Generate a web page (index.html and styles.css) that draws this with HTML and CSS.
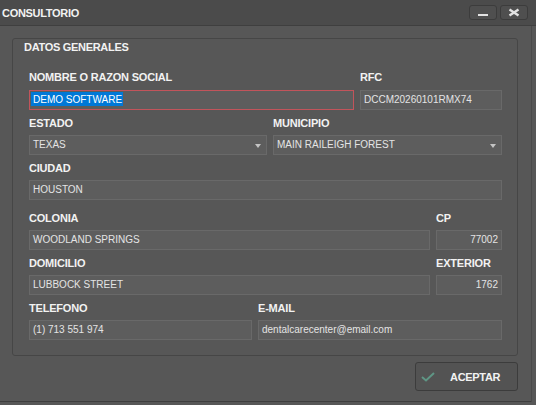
FILE: index.html
```html
<!DOCTYPE html>
<html lang="es">
<head>
    <meta charset="UTF-8">
    <title>Consultorio</title>
    <link rel="stylesheet" href="styles.css">
</head>
<body>
    <div class="window">
        <div class="titlebar">
            <span class="title">CONSULTORIO</span>
            <div class="title-buttons">
                <button class="tbtn" type="button">
                    <svg width="12" height="4" viewBox="0 0 12 4"><rect x="1" y="1" width="10" height="2" fill="#e2e2e2"/></svg>
                </button>
                <button class="tbtn" type="button">
                    <svg width="12" height="9" viewBox="0 0 12 9"><path d="M1.5 1.5 L10.5 7.5 M10.5 1.5 L1.5 7.5" stroke="#e2e2e2" stroke-width="2.4"/></svg>
                </button>
            </div>
        </div>

        <div class="content">
            <fieldset class="groupbox">
                <div class="group-title">DATOS GENERALES</div>

                <div class="row first">
                    <div class="field grow">
                        <label>NOMBRE O RAZON SOCIAL</label>
                        <div class="input active"><span class="selected">DEMO SOFTWARE</span></div>
                    </div>
                    <div class="field w142">
                        <label>RFC</label>
                        <div class="input">DCCM20260101RMX74</div>
                    </div>
                </div>

                <div class="row">
                    <div class="field grow">
                        <label>ESTADO</label>
                        <div class="input select">TEXAS</div>
                    </div>
                    <div class="field w229">
                        <label>MUNICIPIO</label>
                        <div class="input select">MAIN RAILEIGH FOREST</div>
                    </div>
                </div>

                <div class="row">
                    <div class="field grow">
                        <label>CIUDAD</label>
                        <div class="input">HOUSTON</div>
                    </div>
                </div>

                <div class="row spaced">
                    <div class="field grow">
                        <label>COLONIA</label>
                        <div class="input">WOODLAND SPRINGS</div>
                    </div>
                    <div class="field w66">
                        <label>CP</label>
                        <div class="input num">77002</div>
                    </div>
                </div>

                <div class="row">
                    <div class="field grow">
                        <label>DOMICILIO</label>
                        <div class="input">LUBBOCK STREET</div>
                    </div>
                    <div class="field w66">
                        <label>EXTERIOR</label>
                        <div class="input num">1762</div>
                    </div>
                </div>

                <div class="row">
                    <div class="field grow">
                        <label>TELEFONO</label>
                        <div class="input">(1) 713 551 974</div>
                    </div>
                    <div class="field w244">
                        <label>E-MAIL</label>
                        <div class="input">dentalcarecenter@email.com</div>
                    </div>
                </div>
            </fieldset>

            <div class="actions">
                <button class="accept" type="button">
                    <svg width="14" height="10" viewBox="0 0 14 10"><path d="M1 5 L5 8.5 L13 1" fill="none" stroke="#5f9685" stroke-width="2"/></svg>
                    <span>ACEPTAR</span>
                </button>
            </div>
        </div>
    </div>
</body>
</html>
```

FILE: styles.css
```css
body {
    margin: 0;
    background-color: #575757;
    font-family: "Liberation Sans", Arial, sans-serif;
    width: 536px;
    height: 405px;
    overflow: hidden;
}
.window {
    width: 532px;
    height: 402px;
    background-color: #575757;
    border-bottom: 1px solid #3e3e3e;
    box-sizing: border-box;
}
.titlebar {
    height: 26px;
    background-color: #4b4b4b;
    border-bottom: 1px solid #3f3f3f;
    box-sizing: border-box;
    display: flex;
    align-items: flex-start;
    justify-content: space-between;
    width: 536px;
}
.title {
    color: #f2f2f2;
    font-size: 11px;
    font-weight: bold;
    letter-spacing: -0.3px;
    line-height: 12px;
    margin: 7px 0 0 2px;
}
.title-buttons {
    display: flex;
    gap: 3px;
    margin: 5px 8px 0 0;
}
.tbtn {
    width: 28px;
    height: 15px;
    padding: 0;
    background-color: #4f4f4f;
    border: 1px solid #3c3c3c;
    border-radius: 3px;
    display: flex;
    align-items: center;
    justify-content: center;
}
.tbtn:first-child svg {
    margin-top: 5px;
}
.content {
    border-right: 1px solid #4a4a4a;
    height: 376px;
    box-sizing: border-box;
    padding: 12px 0 0 12px;
}
.groupbox {
    margin: 0;
    width: 506px;
    height: 318px;
    box-sizing: border-box;
    border: 1px solid #464646;
    border-radius: 3px;
    padding: 2px 15px 0 16px;
}
.group-title {
    color: #f2f2f2;
    font-size: 11px;
    font-weight: bold;
    letter-spacing: -0.3px;
    line-height: 12px;
    margin-left: -5px;
    margin-bottom: 18px;
}
.row {
    display: flex;
    gap: 6px;
    margin-bottom: 7px;
}
.row.first label {
    margin-bottom: 7px;
}
.row.spaced {
    margin-top: 12px;
}
.field {
    display: flex;
    flex-direction: column;
}
.grow {
    flex: 1;
}
.w142 { width: 142px; }
.w229 { width: 229px; }
.w66 { width: 66px; }
.w244 { width: 244px; }
.field label {
    color: #f2f2f2;
    font-size: 11px;
    font-weight: bold;
    letter-spacing: -0.2px;
    line-height: 12px;
    margin-bottom: 6px;
}
.input {
    position: relative;
    height: 20px;
    box-sizing: border-box;
    background-color: #5d5d5d;
    border: 1px solid #696969;
    color: #e4e4e4;
    font-size: 10px;
    line-height: 18px;
    padding: 0 3px;
    white-space: nowrap;
}
.input.active {
    border-color: #c2545b;
    padding-left: 1px;
}
.selected {
    background-color: #0078d7;
    color: #ffffff;
    padding: 2px 1px 1px 2px;
}
.input.num {
    text-align: right;
}
.input.select::after {
    content: "";
    position: absolute;
    right: 5px;
    top: 8px;
    border-left: 3px solid transparent;
    border-right: 3px solid transparent;
    border-top: 4px solid #c4c4c4;
}
.actions {
    display: flex;
    justify-content: flex-end;
    width: 506px;
    margin-top: 6px;
}
.accept {
    width: 103px;
    height: 29px;
    box-sizing: border-box;
    background-color: #535353;
    border: 1px solid #3c3c3c;
    border-radius: 3px;
    display: flex;
    align-items: center;
    padding: 0 0 0 5px;
    gap: 15px;
    font-family: "Liberation Sans", Arial, sans-serif;
    color: #f2f2f2;
    font-size: 11px;
    font-weight: bold;
    letter-spacing: -0.3px;
}
```
